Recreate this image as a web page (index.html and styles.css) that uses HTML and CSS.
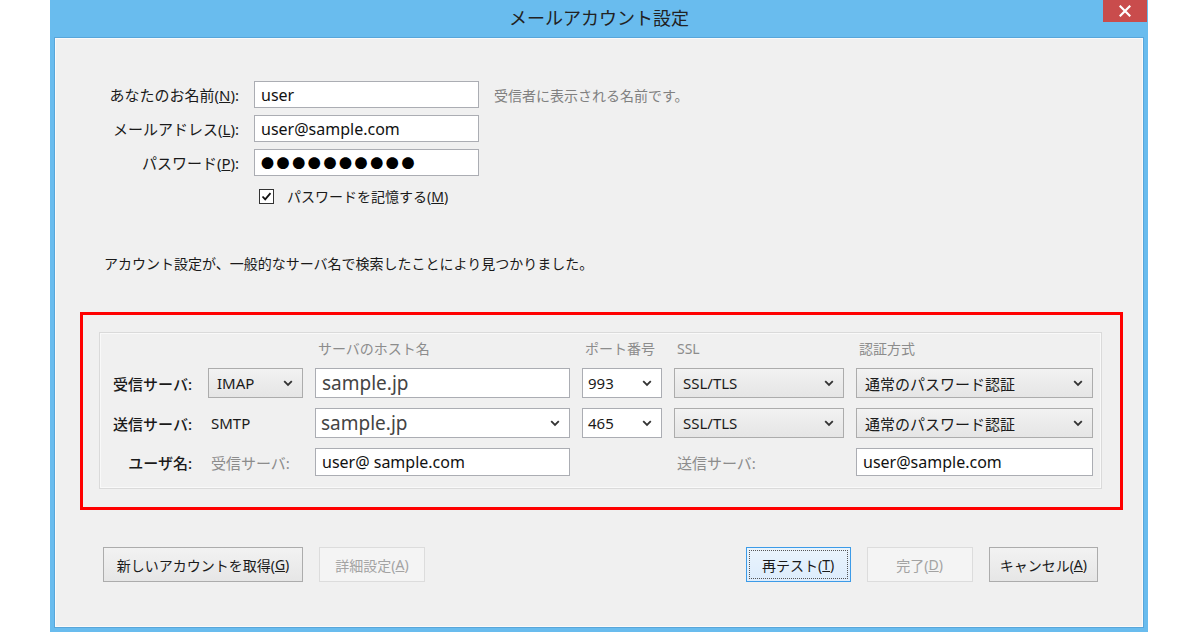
FILE: index.html
```html
<!DOCTYPE html>
<html lang="ja">
<head>
    <meta charset="UTF-8">
    <title>メールアカウント設定</title>
    <link rel="stylesheet" href="styles.css">
</head>
<body>
    <div class="window">
        <div class="titlebar">
            <span></span>
            <div class="title">メールアカウント設定</div>
            <div class="close">
                <svg width="12" height="12" viewBox="0 0 12 12"><path d="M1.5 1.5 L10.5 10.5 M10.5 1.5 L1.5 10.5" stroke="#fff" stroke-width="2.2" stroke-linecap="square"/></svg>
            </div>
        </div>

        <div class="client">
            <div class="identity">
                <label class="lbl">あなたのお名前(<u>N</u>):</label>
                <div class="field">user</div>
                <span class="hint">受信者に表示される名前です。</span>

                <label class="lbl">メールアドレス(<u>L</u>):</label>
                <div class="field">user@sample.com</div>
                <span></span>

                <label class="lbl">パスワード(<u>P</u>):</label>
                <div class="field dots">●●●●●●●●●●</div>
                <span></span>

                <span></span>
                <div class="remember">
                    <span class="checkbox">
                        <svg width="11" height="11" viewBox="0 0 11 11"><path d="M1.5 5.5 L4.2 8.3 L9.5 2.2" fill="none" stroke="#111" stroke-width="1.8"/></svg>
                    </span>
                    <span>パスワードを記憶する(<u>M</u>)</span>
                </div>
                <span></span>
            </div>

            <p class="found">アカウント設定が、一般的なサーバ名で検索したことにより見つかりました。</p>

            <div class="highlight">
                <div class="groupbox">
                    <div class="server-grid">
                        <span></span>
                        <span></span>
                        <span class="colhead">サーバのホスト名</span>
                        <span class="colhead">ポート番号</span>
                        <span class="colhead">SSL</span>
                        <span class="colhead">認証方式</span>

                        <span class="rowlbl">受信サーバ:</span>
                        <div class="combo">IMAP<svg class="chev" width="10" height="7" viewBox="0 0 10 7"><path d="M1.2 1.2 L5 5 L8.8 1.2" fill="none" stroke="#333" stroke-width="1.8"/></svg></div>
                        <div class="field host">sample.jp</div>
                        <div class="combo white">993<svg class="chev" width="10" height="7" viewBox="0 0 10 7"><path d="M1.2 1.2 L5 5 L8.8 1.2" fill="none" stroke="#333" stroke-width="1.8"/></svg></div>
                        <div class="combo">SSL/TLS<svg class="chev" width="10" height="7" viewBox="0 0 10 7"><path d="M1.2 1.2 L5 5 L8.8 1.2" fill="none" stroke="#333" stroke-width="1.8"/></svg></div>
                        <div class="combo">通常のパスワード認証<svg class="chev" width="10" height="7" viewBox="0 0 10 7"><path d="M1.2 1.2 L5 5 L8.8 1.2" fill="none" stroke="#333" stroke-width="1.8"/></svg></div>

                        <span class="rowlbl">送信サーバ:</span>
                        <span class="plain">SMTP</span>
                        <div class="combo white host">sample.jp<svg class="chev" width="10" height="7" viewBox="0 0 10 7"><path d="M1.2 1.2 L5 5 L8.8 1.2" fill="none" stroke="#333" stroke-width="1.8"/></svg></div>
                        <div class="combo white">465<svg class="chev" width="10" height="7" viewBox="0 0 10 7"><path d="M1.2 1.2 L5 5 L8.8 1.2" fill="none" stroke="#333" stroke-width="1.8"/></svg></div>
                        <div class="combo">SSL/TLS<svg class="chev" width="10" height="7" viewBox="0 0 10 7"><path d="M1.2 1.2 L5 5 L8.8 1.2" fill="none" stroke="#333" stroke-width="1.8"/></svg></div>
                        <div class="combo">通常のパスワード認証<svg class="chev" width="10" height="7" viewBox="0 0 10 7"><path d="M1.2 1.2 L5 5 L8.8 1.2" fill="none" stroke="#333" stroke-width="1.8"/></svg></div>

                        <span class="rowlbl">ユーザ名:</span>
                        <span class="plain muted">受信サーバ:</span>
                        <div class="field short">user@ sample.com</div>
                        <span></span>
                        <span class="plain muted">送信サーバ:</span>
                        <div class="field short">user@sample.com</div>
                    </div>
                </div>
            </div>

            <div class="buttons">
                <div class="btn-group">
                    <div class="btn wide">新しいアカウントを取得(<u>G</u>)</div>
                    <div class="btn disabled">詳細設定(<u>A</u>)</div>
                </div>
                <div class="btn-group">
                    <div class="btn focused"><span class="focus-ring">再テスト(<u>T</u>)</span></div>
                    <div class="btn disabled">完了(<u>D</u>)</div>
                    <div class="btn">キャンセル(<u>A</u>)</div>
                </div>
            </div>
        </div>
    </div>
</body>
</html>
```

FILE: styles.css
```css
:root {
    --frame-color: #69bcee;
    --client-bg: #f0f0f0;
    --text-color: #1a1a1a;
    --muted-color: #8c8c8c;
    --field-border: #abadb3;
    --button-border: #acacac;
}

body {
    margin: 0;
    background-color: #ffffff;
    font-family: "Noto Sans", "Noto Sans CJK JP", sans-serif;
    color: var(--text-color);
}

.window {
    margin-left: 50px;
    width: 1098px;
    height: 632px;
    background-color: var(--frame-color);
    display: flex;
    flex-direction: column;
}

.titlebar {
    height: 37px;
    display: grid;
    grid-template-columns: 1fr auto 1fr;
    flex-shrink: 0;
}

.title {
    font-family: "Noto Sans CJK JP", sans-serif;
    font-size: 18px;
    line-height: 34px;
    color: #222;
}

.close {
    justify-self: end;
    align-self: start;
    width: 44px;
    height: 22px;
    margin-right: 1px;
    background-color: #c94c4c;
    display: flex;
    align-items: center;
    justify-content: center;
}

.client {
    flex: 1;
    margin: 0 4px 4px;
    background-color: var(--client-bg);
    border: 1px solid #58a6da;
    box-shadow: inset 0 0 0 1px #fafafa;
    padding: 43px 20px 0 25px;
    box-sizing: border-box;
}

/* top part: name / mail / password */
.identity {
    display: grid;
    grid-template-columns: 159px 225px auto;
    grid-template-rows: 27px 27px 27px 20px;
    column-gap: 15px;
    row-gap: 7px;
    align-items: center;
}

.lbl {
    text-align: right;
    font-size: 15px;
    white-space: nowrap;
}

.field {
    height: 100%;
    box-sizing: border-box;
    background-color: #fff;
    border: 1px solid var(--field-border);
    padding: 0 6px;
    display: flex;
    align-items: center;
    font-size: 16px;
    color: #111;
    white-space: nowrap;
}

.dots {
    font-size: 13px;
    letter-spacing: 2.6px;
    color: #000;
}

.hint {
    font-size: 14px;
    color: #808080;
}

.remember {
    height: 16px;
    margin-top: 6px;
    display: flex;
    align-items: center;
    gap: 13px;
    padding-left: 5px;
    font-size: 14px;
    white-space: nowrap;
}

.checkbox {
    width: 15px;
    height: 15px;
    box-sizing: border-box;
    border: 1px solid #333;
    background-color: #fff;
    display: flex;
    align-items: center;
    justify-content: center;
}

.found {
    margin: 51px 0 0 24px;
    font-size: 14px;
    line-height: 20px;
}

/* server settings */
.highlight {
    margin-top: 38px;
    border: 3px solid #ff0000;
    padding: 17px 18px 18px 16px;
}

.groupbox {
    border: 1px solid #dadada;
    box-shadow: inset 0 0 0 1px #f9f9f9;
    padding: 5px 8px 12px 11px;
}

.server-grid {
    display: grid;
    grid-template-columns: 85px 95px 255px 80px 170px 237px;
    grid-template-rows: 20px 30px 30px 28px;
    column-gap: 12px;
    row-gap: 10px;
    align-items: center;
}

.colhead {
    font-size: 14px;
    color: var(--muted-color);
    padding-left: 3px;
    white-space: nowrap;
}

.rowlbl {
    text-align: right;
    padding-right: 4px;
    font-size: 15px;
    font-weight: 500;
    white-space: nowrap;
}

.plain {
    font-size: 15px;
    padding-left: 3px;
    white-space: nowrap;
}

.muted {
    color: var(--muted-color);
}

.combo {
    height: 100%;
    box-sizing: border-box;
    border: 1px solid var(--button-border);
    background: linear-gradient(#f2f2f2, #e5e5e5);
    display: flex;
    align-items: center;
    justify-content: space-between;
    padding: 0 9px 0 8px;
    font-size: 15px;
    white-space: nowrap;
}

.combo.white {
    background: #fff;
    border-color: var(--field-border);
    padding-left: 5px;
}

.host {
    font-size: 19px;
    color: #444;
}

.short {
    font-size: 16px;
}

/* bottom buttons */
.buttons {
    margin-top: 37px;
    display: flex;
    justify-content: space-between;
    padding: 0 25px 0 23px;
}

.btn-group {
    display: flex;
    gap: 16px;
}

.btn {
    height: 35px;
    min-width: 106px;
    box-sizing: border-box;
    padding: 0 10px;
    border: 1px solid var(--button-border);
    background: linear-gradient(#f2f2f2, #e6e6e6);
    display: flex;
    align-items: center;
    justify-content: center;
    font-size: 14px;
    white-space: nowrap;
}

.btn.wide {
    width: 200px;
}

.btn.disabled {
    border-color: #dcdcdc;
    background: #f4f4f4;
    color: #a3a3a3;
}

.btn.focused {
    border-color: #3c9be8;
    background: linear-gradient(#eaf4fc, #dcecfc);
    padding: 2px;
    min-width: 105px;
}

.focus-ring {
    width: 100%;
    height: 100%;
    box-sizing: border-box;
    border: 1px dotted #555;
    display: flex;
    align-items: center;
    justify-content: center;
}
```
